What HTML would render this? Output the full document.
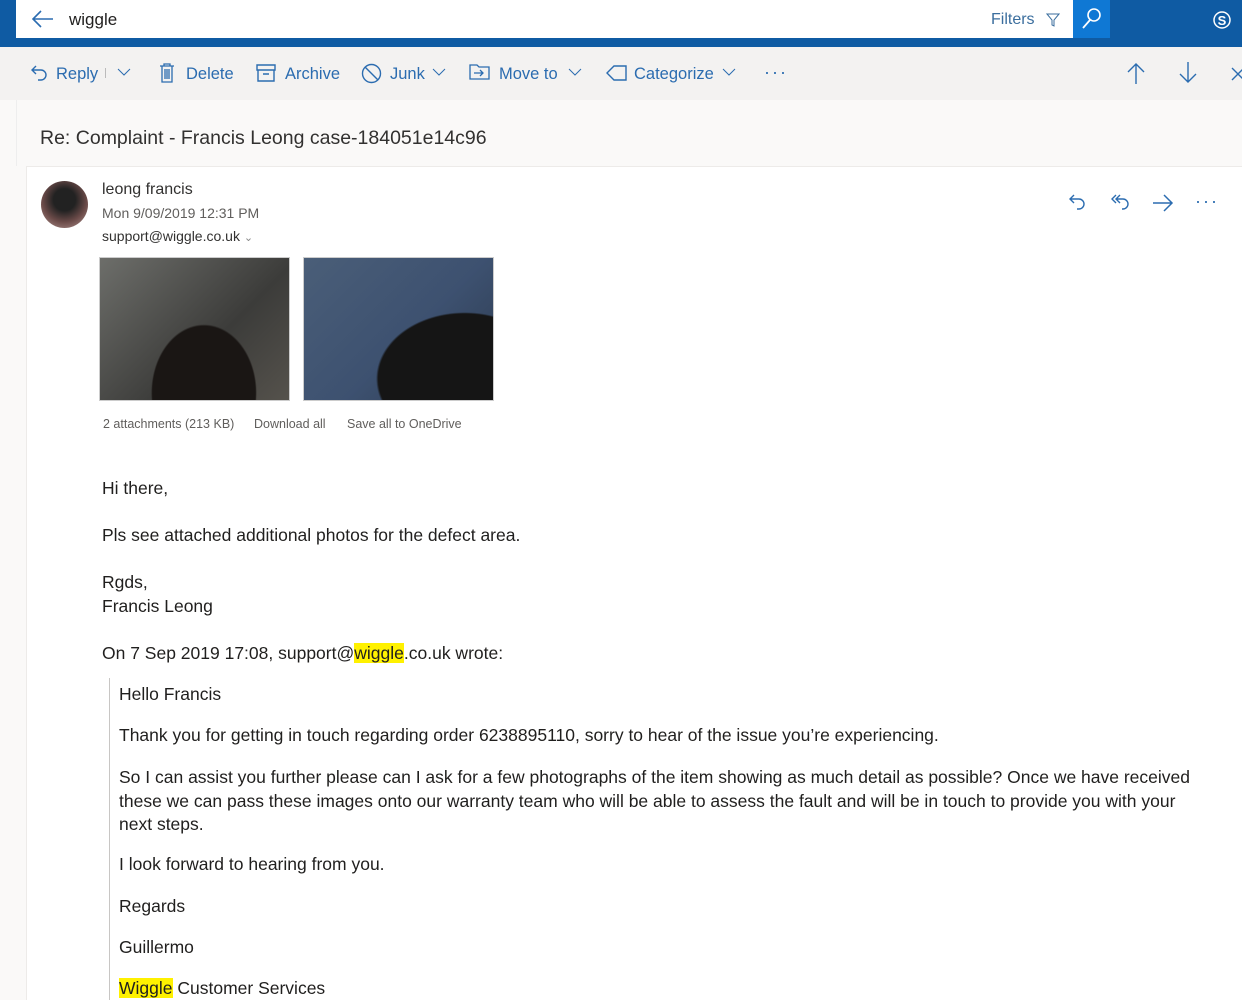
<!DOCTYPE html>
<html><head><meta charset="utf-8"><style>
*{margin:0;padding:0;box-sizing:border-box}
body{width:1242px;height:1000px;overflow:hidden;background:#faf9f8;font-family:"Liberation Sans",sans-serif;color:#323130;position:relative}
.a{position:absolute}
.top{left:0;top:0;width:1242px;height:47px;background:#0f5ba3}
.search{left:16px;top:0;width:1057px;height:38px;background:#fff}
.sbtn{left:1073px;top:0;width:37px;height:38px;background:#0f78d4}
.tb{left:0;top:47px;width:1242px;height:53px;background:#f3f2f1}
.tbi{top:65px;font-size:16.5px;color:#2b6cb0}
.card{left:26px;top:166px;width:1216px;height:834px;background:#fff;border:1px solid #edebe9;border-right:none;border-bottom:none}
.t{font-size:17.5px;color:#201f1e}
svg{position:absolute}
.hl{background:#fff100}
</style></head><body>
<div class="a top"></div>
<div class="a search"></div>
<svg style="left:32px;top:10px" width="22" height="18" viewBox="0 0 22 18"><path d="M21 9H2M9 1L1 9l8 8" stroke="#2b6cb0" stroke-width="1.6" fill="none"/></svg>
<div class="a" style="left:69px;top:10px;font-size:17px;color:#201f1e">wiggle</div>
<div class="a" style="left:991px;top:11px;font-size:16px;color:#3b6e9e">Filters</div>
<svg style="left:1046px;top:13px" width="14" height="14" viewBox="0 0 14 14"><path d="M1 1h12L8 7v6L6 12V7z" stroke="#3b6e9e" fill="none"/></svg>
<div class="a sbtn"></div>
<svg style="left:1081px;top:7px" width="22" height="24" viewBox="0 0 22 24"><circle cx="13" cy="8" r="6" stroke="#fff" stroke-width="1.6" fill="none"/><path d="M9 13L2 21" stroke="#fff" stroke-width="1.8"/></svg>
<svg style="left:1211px;top:9px" width="22" height="22" viewBox="0 0 22 22"><circle cx="11" cy="11" r="8" stroke="#fff" stroke-width="1.5" fill="none"/><text x="11" y="16" font-size="13" fill="#fff" text-anchor="middle" font-family="Liberation Sans" font-weight="bold">S</text></svg>
<div class="a tb"></div>
<svg style="left:30px;top:64px" width="18" height="18" viewBox="0 0 18 18"><path d="M6 2L2 6l4 4M2 6h9a5 5 0 0 1 0 10H8" stroke="#2b6cb0" stroke-width="1.4" fill="none"/></svg>
<div class="a tbi" style="left:56px">Reply</div>
<div class="a" style="left:105px;top:68px;width:1px;height:10px;background:#bbb"></div>
<svg style="left:117px;top:68px" width="14" height="9"><path d="M1 1l6 6 6-6" stroke="#2b6cb0" fill="none"/></svg>
<svg style="left:159px;top:63px" width="16" height="20" viewBox="0 0 16 20"><path d="M1 3h14M5 3V1h6v2M3 3v16h10V3M6 6v10M8 6v10M10 6v10" stroke="#2b6cb0" stroke-width="1.3" fill="none"/></svg>
<div class="a tbi" style="left:186px">Delete</div>
<svg style="left:256px;top:64px" width="20" height="18" viewBox="0 0 20 18"><path d="M1 1h18v5H1zM2 6v11h16V6M7 10h6" stroke="#2b6cb0" stroke-width="1.4" fill="none"/></svg>
<div class="a tbi" style="left:285px">Archive</div>
<svg style="left:361px;top:63px" width="21" height="21" viewBox="0 0 21 21"><circle cx="10.5" cy="10.5" r="9" stroke="#2b6cb0" stroke-width="1.4" fill="none"/><path d="M4 4l13 13" stroke="#2b6cb0" stroke-width="1.4"/></svg>
<div class="a tbi" style="left:390px">Junk</div>
<svg style="left:432px;top:68px" width="14" height="9"><path d="M1 1l6 6 6-6" stroke="#2b6cb0" fill="none"/></svg>
<svg style="left:469px;top:64px" width="22" height="16" viewBox="0 0 22 16"><path d="M1 1h7l2 2h10v12H1zM5 9h9M11 6l3 3-3 3" stroke="#2b6cb0" stroke-width="1.3" fill="none"/></svg>
<div class="a tbi" style="left:499px">Move to</div>
<svg style="left:568px;top:68px" width="14" height="9"><path d="M1 1l6 6 6-6" stroke="#2b6cb0" fill="none"/></svg>
<svg style="left:606px;top:64px" width="22" height="18" viewBox="0 0 22 18"><path d="M8 2h12v14H8L1 9z" stroke="#2b6cb0" stroke-width="1.4" fill="none"/></svg>
<div class="a tbi" style="left:634px">Categorize</div>
<svg style="left:722px;top:68px" width="14" height="9"><path d="M1 1l6 6 6-6" stroke="#2b6cb0" fill="none"/></svg>
<div class="a tbi" style="left:764px;top:62px;letter-spacing:2px;font-size:18px">···</div>
<svg style="left:1126px;top:62px" width="20" height="22"><path d="M10 22V2M2 10l8-8 8 8" stroke="#2b6cb0" stroke-width="1.4" fill="none"/></svg>
<svg style="left:1178px;top:62px" width="20" height="22"><path d="M10 0v20M2 12l8 8 8-8" stroke="#2b6cb0" stroke-width="1.4" fill="none"/></svg>
<svg style="left:1230px;top:66px" width="12" height="16"><path d="M2 2l12 12M14 2L2 14" stroke="#2b6cb0" stroke-width="1.4"/></svg>
<div class="a" style="left:16px;top:100px;width:1226px;height:66px;background:#faf9f8;border-left:1px solid #eee"></div>
<div class="a" style="left:40px;top:127px;font-size:19.5px;color:#323130">Re: Complaint - Francis Leong case-184051e14c96</div>
<div class="a card"></div>
<div class="a" style="left:41px;top:181px;width:47px;height:47px;border-radius:50%;background:radial-gradient(circle at 50% 40%,#222 30%,#6a4a48 60%,#b89a96)"></div>
<div class="a" style="left:102px;top:181px;font-size:16px;color:#323130">leong francis</div>
<div class="a" style="left:102px;top:205px;font-size:14px;color:#605e5c">Mon 9/09/2019 12:31 PM</div>
<div class="a" style="left:102px;top:228px;font-size:14px;color:#323130">support@wiggle.co.uk <span style="color:#888;font-size:11px">⌄</span></div>
<svg style="left:1068px;top:193px" width="20" height="20" viewBox="0 0 20 20"><path d="M6 2L2 6l4 4M2 6h9a5 5 0 0 1 0 10H9" stroke="#2b6cb0" stroke-width="1.4" fill="none"/></svg>
<svg style="left:1110px;top:192px" width="24" height="22" viewBox="0 0 24 22"><path d="M10 3L6 7l4 4M6 7h7a5 5 0 0 1 0 10h-1M6 3L2 7l4 4" stroke="#2b6cb0" stroke-width="1.4" fill="none"/></svg>
<svg style="left:1152px;top:193px" width="22" height="20"><path d="M1 10h19M12 2l8 8-8 8" stroke="#2b6cb0" stroke-width="1.5" fill="none"/></svg>
<div class="a" style="left:1195px;top:191px;font-size:18px;color:#2b6cb0;letter-spacing:2px">···</div>
<div class="a" style="left:99px;top:257px;width:191px;height:144px;border:1px solid #ccc;background:radial-gradient(ellipse at 55% 95%,#1a1614 35%,transparent 36%),linear-gradient(135deg,#6d6e6a,#3c3c3a 60%,#55524c)"></div>
<div class="a" style="left:303px;top:257px;width:191px;height:144px;border:1px solid #ccc;background:radial-gradient(ellipse at 85% 85%,#151515 38%,transparent 39%),linear-gradient(135deg,#4a5e78,#3d5170 55%,#2c3a4e)"></div>
<div class="a" style="left:103px;top:417px;font-size:12.5px;color:#605e5c">2 attachments (213 KB)</div>
<div class="a" style="left:254px;top:417px;font-size:12.5px;color:#605e5c">Download all</div>
<div class="a" style="left:347px;top:417px;font-size:12.5px;color:#605e5c">Save all to OneDrive</div>
<div class="a t" style="left:102px;top:478px">Hi there,</div>
<div class="a t" style="left:102px;top:525px">Pls see attached additional photos for the defect area.</div>
<div class="a t" style="left:102px;top:572px">Rgds,</div>
<div class="a t" style="left:102px;top:596px">Francis Leong</div>
<div class="a t" style="left:102px;top:643px">On 7 Sep 2019 17:08, support@<span class="hl">wiggle</span>.co.uk wrote:</div>
<div class="a" style="left:109px;top:678px;width:1px;height:322px;background:#c8c6c4"></div>
<div class="a t" style="left:119px;top:684px">Hello Francis</div>
<div class="a t" style="left:119px;top:725px">Thank you for getting in touch regarding order 6238895110, sorry to hear of the issue you’re experiencing.</div>
<div class="a t" style="left:119px;top:766px;width:1090px;line-height:23.5px">So I can assist you further please can I ask for a few photographs of the item showing as much detail as possible? Once we have received these we can pass these images onto our warranty team who will be able to assess the fault and will be in touch to provide you with your next steps.</div>
<div class="a t" style="left:119px;top:854px">I look forward to hearing from you.</div>
<div class="a t" style="left:119px;top:896px">Regards</div>
<div class="a t" style="left:119px;top:937px">Guillermo</div>
<div class="a t" style="left:119px;top:978px"><span class="hl">Wiggle</span> Customer Services</div>
</body></html>
